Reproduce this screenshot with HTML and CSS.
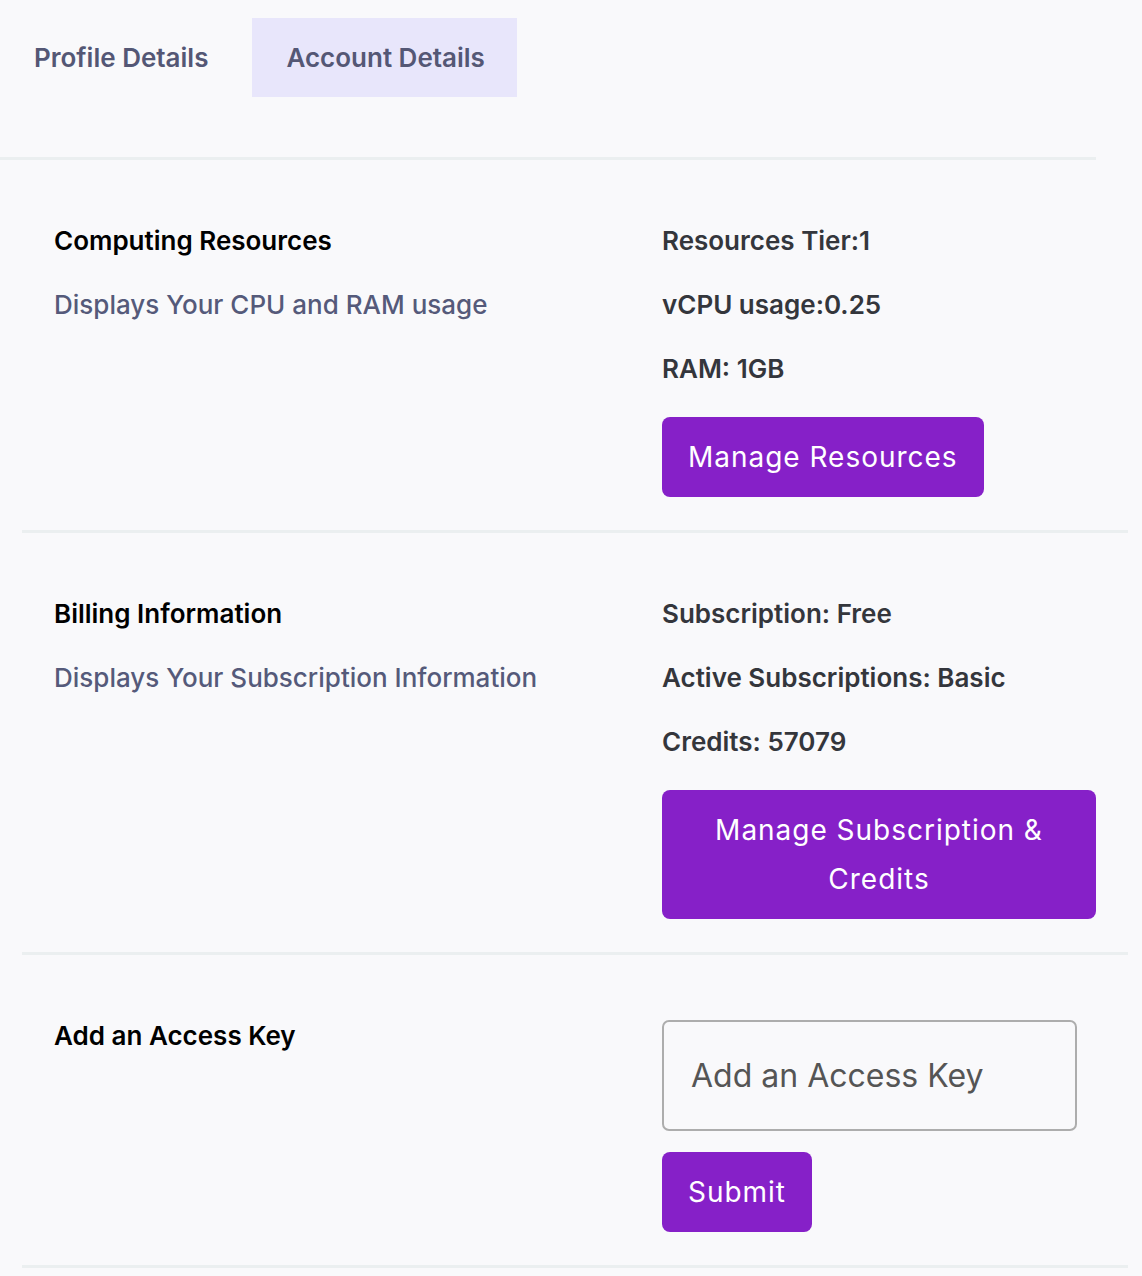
FILE: index.html
```html
<!DOCTYPE html>
<html lang="en">
<head>
<meta charset="utf-8">
<title>Account Details</title>
<link rel="stylesheet" href="styles.css">
</head>
<body>
<div class="page">
  <nav class="tabs">
    <div class="tab">Profile Details</div>
    <div class="tab tab-active">Account Details</div>
  </nav>
  <div class="tabs-rule"></div>

  <section class="row">
    <div class="info">
      <h2 class="title">Computing Resources</h2>
      <p class="subtitle">Displays Your CPU and RAM usage</p>
    </div>
    <div class="detail">
      <p class="stat">Resources Tier:1</p>
      <p class="stat">vCPU usage:0.25</p>
      <p class="stat">RAM: 1GB</p>
      <button class="btn">Manage Resources</button>
    </div>
  </section>

  <section class="row">
    <div class="info">
      <h2 class="title">Billing Information</h2>
      <p class="subtitle">Displays Your Subscription Information</p>
    </div>
    <div class="detail">
      <p class="stat">Subscription: Free</p>
      <p class="stat">Active Subscriptions: Basic</p>
      <p class="stat">Credits: 57079</p>
      <button class="btn btn-wide">Manage Subscription &amp; Credits</button>
    </div>
  </section>

  <section class="row">
    <div class="info">
      <h2 class="title">Add an Access Key</h2>
    </div>
    <div class="detail detail-form">
      <input class="key-input" type="text" placeholder="Add an Access Key">
      <button class="btn">Submit</button>
    </div>
  </section>
</div>
</body>
</html>
```
FILE: styles.css
```css
* { box-sizing: border-box; }

html, body {
  margin: 0;
  padding: 0;
  background: #f9f9fb;
}

body {
  font-family: Inter, "Noto Sans", "Liberation Sans", sans-serif;
  width: 1142px;
  min-height: 1276px;
}

.page {
  width: 1142px;
}

.tabs {
  display: flex;
  gap: 10px;
  padding-top: 18px;
}

.tab {
  height: 79px;
  padding: 0 34px;
  display: flex;
  align-items: center;
  font-size: 26px;
  font-weight: 600;
  color: #545775;
}

.tab-active {
  background: #e8e6fb;
  padding: 0 32px 0 34px;
}

.tabs-rule {
  margin-top: 60px;
  width: 1096px;
  height: 3px;
  background: #ebeff0;
}

.row {
  margin-left: 22px;
  width: 1106px;
  display: grid;
  grid-template-columns: 608px 434px;
  padding: 63px 32px 33px;
  border-bottom: 3px solid #ebeff0;
}

.info {
  display: flex;
  flex-direction: column;
  gap: 28px;
}

.title {
  margin: 0;
  font-size: 26px;
  line-height: 36px;
  font-weight: 600;
  color: #000;
}

.subtitle {
  margin: 0;
  font-size: 26px;
  line-height: 36px;
  font-weight: 500;
  color: #555a7a;
}

.detail {
  display: flex;
  flex-direction: column;
  align-items: flex-start;
  gap: 28px;
}

.stat {
  margin: 0;
  font-size: 26px;
  line-height: 36px;
  font-weight: 600;
  color: #34363c;
}

.btn {
  margin-top: 2px;
  border: 0;
  border-radius: 8px;
  background: #8620c8;
  color: #fff;
  font-family: inherit;
  font-size: 28px;
  font-weight: 400;
  letter-spacing: 0.035em;
  line-height: 49px;
  padding: 16px 26px 15px;
  text-align: center;
  cursor: pointer;
}

.btn-wide {
  width: 434px;
  padding: 16px 40px 15px;
}

.detail-form {
  gap: 21px;
}

.key-input {
  margin-top: 2px;
  width: 415px;
  height: 111px;
  border: 2px solid #adadad;
  border-radius: 7px;
  background: #f9f9fb;
  padding: 0 27px;
  font-family: inherit;
  font-size: 32px;
  letter-spacing: 0;
  color: #333;
}

.key-input::placeholder {
  color: #555;
}

.detail-form .btn {
  margin-top: 0;
}
```
